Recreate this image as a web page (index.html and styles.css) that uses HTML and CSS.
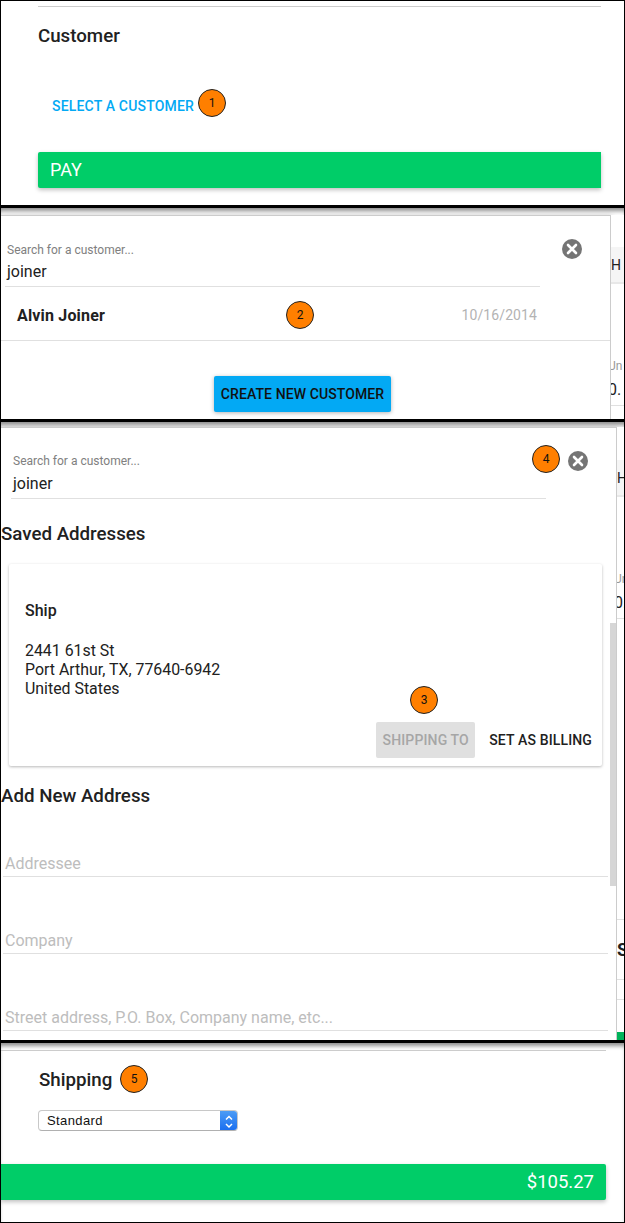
FILE: index.html
```html
<!DOCTYPE html>
<html lang="en">
<head>
    <meta charset="UTF-8">
    <title>Checkout steps</title>
    <link rel="stylesheet" href="styles.css">
</head>
<body>
    <div class="page">

        <section class="shot shot-customer">
            <hr class="rule">
            <h2 class="section-title">Customer</h2>
            <div class="link-row"><a class="link-btn">SELECT A CUSTOMER</a></div>
            <button class="pay-btn">PAY</button>
            <span class="badge badge-1">1</span>
        </section>

        <section class="shot shot-search">
            <div class="modal modal-search">
                <div class="modal-head">
                    <div class="field">
                        <div class="field-label">Search for a customer...</div>
                        <div class="field-value">joiner</div>
                    </div>
                    <svg class="close-icon" viewBox="0 0 20 20"><circle cx="10" cy="10" r="10" fill="#757575"/><path d="M6 6l8 8M14 6l-8 8" stroke="#fff" stroke-width="2.6" stroke-linecap="round"/></svg>
                </div>
                <div class="result-row">
                    <span class="result-name">Alvin Joiner</span>
                    <span class="result-date">10/16/2014</span>
                </div>
                <div class="create-row"><button class="create-btn">CREATE NEW CUSTOMER</button></div>
            </div>
            <div class="behind behind-search">
                <div class="behind-tab">H</div>
                <div class="behind-small">Un</div>
                <div class="behind-num">0.</div>
            </div>
            <span class="badge badge-2">2</span>
        </section>

        <section class="shot shot-address">
            <div class="modal modal-address">
                <div class="modal-head">
                    <div class="field">
                        <div class="field-label">Search for a customer...</div>
                        <div class="field-value">joiner</div>
                    </div>
                    <svg class="close-icon" viewBox="0 0 20 20"><circle cx="10" cy="10" r="10" fill="#757575"/><path d="M6 6l8 8M14 6l-8 8" stroke="#fff" stroke-width="2.6" stroke-linecap="round"/></svg>
                </div>
                <h2 class="modal-title">Saved Addresses</h2>
                <div class="address-card">
                    <div class="address-type">Ship</div>
                    <div class="address-lines">
                        2441 61st St<br>
                        Port Arthur, TX, 77640-6942<br>
                        United States
                    </div>
                    <div class="address-actions">
                        <button class="flat-btn flat-btn-off">SHIPPING TO</button>
                        <button class="flat-btn">SET AS BILLING</button>
                    </div>
                </div>
                <h2 class="modal-title modal-title-add">Add New Address</h2>
                <div class="new-field">Addressee</div>
                <div class="new-field">Company</div>
                <div class="new-field">Street address, P.O. Box, Company name, etc...</div>
                <div class="scrollbar"><div class="scrollbar-thumb"></div></div>
            </div>
            <div class="behind behind-address">
                <div class="behind-tab">H</div>
                <div class="behind-small">Un</div>
                <div class="behind-num">0.</div>
                <div class="behind-line behind-line-first"></div>
                <div class="behind-title">S</div>
                <div class="behind-line"></div>
                <div class="behind-line"></div>
                <div class="behind-green"></div>
            </div>
            <span class="badge badge-3">3</span>
            <span class="badge badge-4">4</span>
        </section>

        <section class="shot shot-shipping">
            <hr class="rule rule-wide">
            <h2 class="section-title section-title-ship">Shipping</h2>
            <div class="select">
                <span class="select-text">Standard</span>
                <span class="select-arrows">
                    <svg viewBox="0 0 16 21" width="16" height="21"><path d="M5 8.5l3-3 3 3M5 13l3 3 3-3" fill="none" stroke="#fff" stroke-width="1.5"/></svg>
                </span>
            </div>
            <div class="total-bar">$105.27</div>
            <span class="badge badge-5">5</span>
        </section>

    </div>
</body>
</html>
```

FILE: styles.css
```css
* {
    box-sizing: border-box;
}
body {
    margin: 0;
    font-family: Roboto, Arial, sans-serif;
    color: #212121;
    background-color: #fff;
}
h2 {
    margin: 0;
    font-weight: 500;
}
button {
    font-family: inherit;
    border: none;
    cursor: pointer;
}
.page {
    width: 625px;
    height: 1223px;
    border: 1px solid #000;
    overflow: hidden;
    background-color: #fff;
}
.shot {
    position: relative;
    overflow: hidden;
    background-color: #fff;
}
.shot-customer {
    height: 204px;
    padding: 5px 0 0 37px;
}
.shot-search,
.shot-address,
.shot-shipping {
    box-shadow: inset 0 5px 4px -2px rgba(0,0,0,0.45);
    border-top: 3px solid #000;
}
.shot-search {
    height: 214px;
    padding-top: 7px;
    display: flex;
}
.shot-address {
    height: 621px;
    padding-top: 5px;
    display: flex;
}
.shot-shipping {
    height: 182px;
    padding-top: 7px;
}

.rule {
    width: 563px;
    margin: 0;
    border: none;
    border-top: 1px solid #ccc;
}
.rule-wide {
    width: 605px;
}
.section-title {
    font-size: 18.72px;
    line-height: 22px;
    margin-top: 18px;
}
.section-title-ship {
    margin: 18px 0 0 38px;
}
.link-row {
    margin: 49px 0 0 14px;
    height: 20px;
}
.link-btn {
    font-size: 14px;
    font-weight: 500;
    letter-spacing: 0.18px;
    line-height: 20px;
    color: #03a9f4;
}
.pay-btn {
    display: block;
    width: 563px;
    height: 36px;
    margin-top: 36px;
    padding: 0 12px 2px;
    text-align: left;
    font-size: 18px;
    color: #fff;
    background-color: #00cd68;
    border-radius: 2px 0 0 2px;
    box-shadow: 0 2px 4px rgba(0,0,0,0.25);
}

.badge {
    position: absolute;
    width: 28px;
    height: 28px;
    border: 1px solid #222;
    border-radius: 50%;
    background-color: #ff7f00;
    color: #111;
    font-size: 12px;
    line-height: 26px;
    text-align: center;
}
.badge-1 { left: 197px; top: 88px; }
.badge-2 { left: 285px; top: 93px; }
.badge-3 { left: 409px; top: 264px; }
.badge-4 { left: 531px; top: 23px; }
.badge-5 { left: 119px; top: 22px; }

.modal {
    flex: none;
    background-color: #fff;
    border-top: 1px solid #ccc;
    border-right: 1px solid #ccc;
    box-shadow: 1px 1px 5px rgba(0,0,0,0.25);
}
.modal-search {
    width: 610px;
}
.modal-address {
    width: 616px;
    position: relative;
}
.modal-head {
    display: flex;
    align-items: flex-start;
    padding: 23px 0 0 4px;
}
.modal-address .modal-head {
    padding: 23px 0 0 10px;
}
.field {
    width: 535px;
    height: 48px;
    border-bottom: 1px solid #e0e0e0;
    padding: 2px 0 0 2px;
}
.modal-address .field {
    padding-top: 1px;
}
.field-label {
    font-size: 12px;
    line-height: 18px;
    color: #808080;
}
.field-value {
    font-size: 16px;
    line-height: 24px;
    margin-top: 1px;
}
.modal-address .field-value {
    margin-top: 2px;
}
.close-icon {
    width: 20px;
    height: 20px;
    margin: 0 0 0 22px;
}
.result-row {
    display: flex;
    justify-content: space-between;
    align-items: center;
    height: 54px;
    padding: 3px 73px 0 16px;
    border-bottom: 1px solid #e0e0e0;
}
.result-name {
    font-size: 16px;
    font-weight: 700;
    letter-spacing: 0.17px;
}
.result-date {
    font-size: 14px;
    letter-spacing: 0.1px;
    color: #b3b3b3;
}
.create-row {
    display: flex;
    justify-content: center;
    padding: 35px 0 0 0;
    margin-right: 6px;
}
.create-btn {
    width: 177px;
    height: 36px;
    padding: 0;
    font-size: 14px;
    font-weight: 500;
    letter-spacing: 0.1px;
    color: #111;
    background-color: #03a9f4;
    border-radius: 2px;
    box-shadow: 0 1px 4px rgba(0,0,0,0.3);
}

.modal-title {
    font-size: 18.72px;
    line-height: 22px;
    margin-top: 24px;
}
.modal-title-add {
    margin-top: 19px;
}
.address-card {
    width: 593px;
    height: 202px;
    margin: 19px 0 0 8px;
    padding: 38px 10px 0 16px;
    border-radius: 2px;
    box-shadow: 0 1px 3px rgba(0,0,0,0.28);
}
.address-type {
    font-size: 16px;
    font-weight: 500;
    line-height: 18px;
}
.address-lines {
    margin-top: 21px;
    font-size: 15.9px;
    line-height: 19px;
}
.address-actions {
    display: flex;
    justify-content: flex-end;
    align-items: center;
    gap: 14px;
    margin-top: 24px;
}
.flat-btn {
    height: 36px;
    padding: 0;
    font-size: 14px;
    font-weight: 500;
    letter-spacing: 0.14px;
    color: #212121;
    background: none;
    border-radius: 2px;
}
.flat-btn-off {
    width: 99px;
    color: #a6a6a6;
    background-color: #e0e0e0;
}
.new-field {
    width: 605px;
    height: 25px;
    margin: 52px 0 0 2px;
    padding-left: 2px;
    border-bottom: 1px solid #e0e0e0;
    font-size: 16px;
    line-height: 24px;
    color: #bdbdbd;
}
.modal-title-add + .new-field {
    margin-top: 45px;
}
.scrollbar {
    position: absolute;
    right: 0;
    top: 0;
    bottom: 0;
    width: 6px;
    background-color: #fff;
}
.scrollbar-thumb {
    margin-top: 195px;
    height: 263px;
    background-color: #d6d6d6;
}

.behind {
    flex: 1;
    overflow: hidden;
    position: relative;
    background-color: #fff;
}
.behind-tab {
    height: 37px;
    font-size: 14px;
    line-height: 37px;
    background-color: #f5f5f5;
    border-bottom: 2px solid #e8e8e8;
}
.behind-small {
    margin: 0 0 0 -3px;
    font-size: 12px;
    color: #999;
}
.behind-num {
    margin: 7px 0 0 -3px;
    font-size: 16px;
    padding-bottom: 6px;
    border-bottom: 1px solid #e0e0e0;
}
.behind-search .behind-tab {
    margin-top: 32px;
}
.behind-search .behind-small {
    margin-top: 75px;
}
.behind-address .behind-tab {
    margin-top: 33px;
}
.behind-address .behind-small {
    margin-top: 75px;
}
.behind-line {
    height: 1px;
    margin-top: 19px;
    background-color: #e0e0e0;
}
.behind-line-first {
    margin-top: 300px;
}
.behind-title {
    margin-top: 19px;
    font-size: 18px;
    line-height: 21px;
    font-weight: 700;
}
.behind-green {
    height: 8px;
    margin-top: 32px;
    background-color: #00b35a;
}

.select {
    display: flex;
    width: 200px;
    height: 21px;
    margin: 19px 0 0 37px;
    border: 1px solid #c8c8c8;
    border-bottom-color: #b0b0b0;
    border-radius: 4px;
    overflow: hidden;
    font-family: "Liberation Sans", Arial, sans-serif;
    font-size: 13px;
    letter-spacing: 0.4px;
    color: #111;
}
.select-text {
    flex: 1;
    padding-left: 8px;
    line-height: 19px;
}
.select-arrows {
    width: 17px;
    background: linear-gradient(#4c9cf5, #1b6ff0);
    display: flex;
    justify-content: center;
}
.total-bar {
    width: 605px;
    height: 36px;
    margin-top: 33px;
    padding-right: 12px;
    text-align: right;
    font-size: 18.5px;
    line-height: 36px;
    color: #fff;
    background-color: #00cd68;
    border-radius: 0 2px 2px 0;
    box-shadow: 0 2px 4px rgba(0,0,0,0.25);
}
```
